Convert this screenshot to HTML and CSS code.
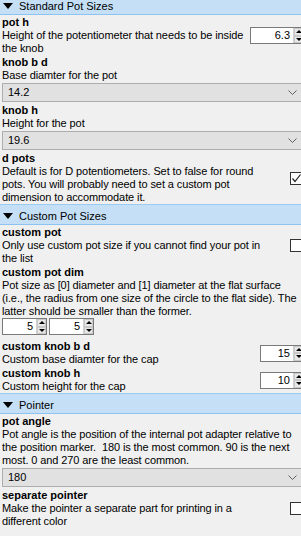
FILE: index.html
```html
<!DOCTYPE html>
<html lang="en">
<head>
  <meta charset="UTF-8" />
  <meta name="viewport" content="width=device-width, initial-scale=1.0" />
  <title>Customizer</title>
  <link rel="stylesheet" href="styles.css">
</head>
<body>
  <div class="panel">

    <div class="group-head"><span class="caret"></span>Standard Pot Sizes</div>

    <div class="param row">
      <div class="info">
        <div class="name">pot h</div>
        <div class="desc">Height of the potentiometer that needs to be inside the knob</div>
      </div>
      <div class="spin wide"><span class="val">6.3</span><span class="arrows"><i class="up"></i><i class="down"></i></span></div>
    </div>

    <div class="param">
      <div class="name">knob b d</div>
      <div class="desc">Base diamter for the pot</div>
      <div class="combo"><span>14.2</span><svg class="chev" width="9" height="6" viewBox="0 0 9 6"><path d="M0.5 0.5 L4.5 4.5 L8.5 0.5" fill="none" stroke="#606060" stroke-width="1"/></svg></div>
    </div>

    <div class="param">
      <div class="name">knob h</div>
      <div class="desc">Height for the pot</div>
      <div class="combo"><span>19.6</span><svg class="chev" width="9" height="6" viewBox="0 0 9 6"><path d="M0.5 0.5 L4.5 4.5 L8.5 0.5" fill="none" stroke="#606060" stroke-width="1"/></svg></div>
    </div>

    <div class="param row">
      <div class="info">
        <div class="name">d pots</div>
        <div class="desc">Default is for D potentiometers. Set to false for round pots. You will probably need to set a custom pot dimension to accommodate it.</div>
      </div>
      <div class="check"><svg width="11" height="11" viewBox="0 0 11 11"><path d="M1.5 5.5 L4 8.5 L9.5 1.5" fill="none" stroke="#222" stroke-width="1.2"/></svg></div>
    </div>

    <div class="group-head"><span class="caret"></span>Custom Pot Sizes</div>

    <div class="param row">
      <div class="info">
        <div class="name">custom pot</div>
        <div class="desc">Only use custom pot size if you cannot find your pot in the list</div>
      </div>
      <div class="check"></div>
    </div>

    <div class="param">
      <div class="name">custom pot dim</div>
      <div class="desc">Pot size as [0] diameter and [1] diameter at the flat surface (i.e., the radius from one size of the circle to the flat side). The latter should be smaller than the former.</div>
      <div class="spins">
        <div class="spin"><span class="val">5</span><span class="arrows"><i class="up"></i><i class="down"></i></span></div>
        <div class="spin"><span class="val">5</span><span class="arrows"><i class="up"></i><i class="down"></i></span></div>
      </div>
    </div>

    <div class="param row">
      <div class="info">
        <div class="name">custom knob b d</div>
        <div class="desc">Custom base diamter for the cap</div>
      </div>
      <div class="spin"><span class="val">15</span><span class="arrows"><i class="up"></i><i class="down"></i></span></div>
    </div>

    <div class="param row">
      <div class="info">
        <div class="name">custom knob h</div>
        <div class="desc">Custom height for the cap</div>
      </div>
      <div class="spin"><span class="val">10</span><span class="arrows"><i class="up"></i><i class="down"></i></span></div>
    </div>

    <div class="group-head"><span class="caret"></span>Pointer</div>

    <div class="param">
      <div class="name">pot angle</div>
      <div class="desc">Pot angle is the position of the internal pot adapter relative to the position marker.&nbsp; 180 is the most common. 90 is the next most. 0 and 270 are the least common.</div>
      <div class="combo"><span>180</span><svg class="chev" width="9" height="6" viewBox="0 0 9 6"><path d="M0.5 0.5 L4.5 4.5 L8.5 0.5" fill="none" stroke="#606060" stroke-width="1"/></svg></div>
    </div>

    <div class="param row">
      <div class="info">
        <div class="name">separate pointer</div>
        <div class="desc">Make the pointer a separate part for printing in a different color</div>
      </div>
      <div class="check"></div>
    </div>

  </div>
</body>
</html>
```

FILE: styles.css
```css
* { box-sizing: border-box; margin: 0; padding: 0; }
html, body { background: #f0f0f0; overflow: hidden; }
body { font-family: 'Liberation Sans', Arial, sans-serif; font-size: 11px; line-height: 13px; color: #000; }

/* scrolled a few pixels down, panel is a bit wider than the window */
.panel { width: 304px; margin-top: -6px; }

.group-head { height: 21px; line-height: 16px; padding-top: 3px; background: #c4dff6; border-top: 1px solid #9ccbf2; border-bottom: 1px solid #8dc3f0; padding-left: 19px; position: relative; }
.caret { position: absolute; left: 3px; top: 8px; width: 0; height: 0; border-left: 5px solid transparent; border-right: 5px solid transparent; border-top: 6px solid #000; }

.param { padding: 1px 0 0 2px; }
.param.row { display: flex; align-items: center; }
.info { flex: 1; min-width: 0; }
.name { font-weight: bold; }
.desc { letter-spacing: -0.1px; }

.combo { margin: 1px 0; height: 19px; background: #e1e1e1; border: 1px solid #adadad; display: flex; align-items: center; justify-content: space-between; padding: 0 6px 0 5px; }
.chev { margin-top: 1px; }

.spin { display: flex; width: 44px; height: 17px; background: #fff; border: 1px solid #7a7a7a; flex: none; }
.spin.wide { width: 54px; }
.spin .val { flex: 1; text-align: right; padding-right: 3px; line-height: 15px; }
.spin .arrows { width: 10px; display: flex; flex-direction: column; border-left: 1px solid #d0d0d0; }
.spin .arrows i { flex: 1; background: #e8e8e8; border: 1px solid #c8c8c8; display: flex; align-items: center; justify-content: center; }
.spin .arrows i::after { content: ""; width: 0; height: 0; border-left: 3px solid transparent; border-right: 3px solid transparent; }
.spin .arrows .up::after { border-bottom: 3px solid #000; }
.spin .arrows .down::after { border-top: 3px solid #000; }

.spins { display: flex; gap: 2px; margin: 0 0 4px; }
.spins .spin { width: 45px; }

.check { width: 13px; height: 13px; margin-left: 18px; background: #fff; border: 1px solid #333; flex: none; display: flex; align-items: center; justify-content: center; margin-right: 1px; }
```
